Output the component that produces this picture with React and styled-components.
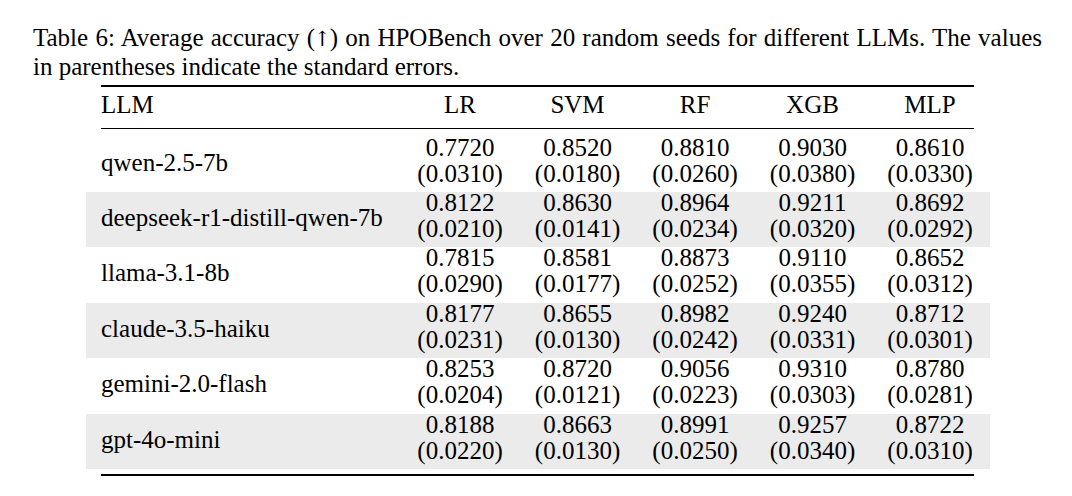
import React from 'react';
import styled, { createGlobalStyle } from 'styled-components';

const GlobalStyle = createGlobalStyle`
  html, body {
    margin: 0;
    padding: 0;
    background: #ffffff;
  }
  body {
    font-family: 'Liberation Serif', 'Times New Roman', serif;
    color: #000000;
  }
`;

const Page = styled.div`
  width: 1072px;
  height: 496px;
  overflow: hidden;
  background: #ffffff;
`;

const Caption = styled.div`
  width: 1009px;
  padding: 23.8px 0 0 33px;
  font-size: 25px;
  line-height: 28.5px;
`;

const CaptionLine = styled.div`
  white-space: nowrap;
  text-align: ${(p) => (p.$justify ? 'justify' : 'left')};
  text-align-last: ${(p) => (p.$justify ? 'justify' : 'left')};
`;

const Arrow = styled.span`
  font-family: 'DejaVu Serif', serif;
  font-size: 21px;
  margin: 0 -1.5px;
`;

const Table = styled.div`
  width: 904px;
  margin: 3.2px 0 0 86px;
  font-size: 25px;
`;

const Rule = styled.div`
  margin: ${(p) => p.$top || 0}px 16px 0 15px;
  height: ${(p) => p.$weight}px;
  background: #000000;
`;

const Row = styled.div`
  display: grid;
  grid-template-columns: 1fr repeat(5, 88px);
  column-gap: 29.5px;
  padding: 0 16px 0 15px;
  background: ${(p) => (p.$shaded ? '#ebebeb' : 'transparent')};
`;

const HeadRow = styled(Row)`
  padding-top: 4.3px;
  padding-bottom: 8.2px;
  line-height: 28.5px;
`;

const HeadCell = styled.div`
  text-align: ${(p) => (p.$left ? 'left' : 'center')};
  white-space: nowrap;
`;

const Body = styled.div`
  margin-top: 7.6px;
`;

const DataRow = styled(Row)`
  height: 55.4px;
  line-height: 21px;
`;

const Name = styled.div`
  padding-top: 15px;
  white-space: nowrap;
`;

const Cell = styled.div`
  display: flex;
  flex-direction: column;
  align-items: center;
  gap: 5px;
  white-space: nowrap;
`;

const columns = ['LR', 'SVM', 'RF', 'XGB', 'MLP'];

const rows = [
  { name: 'qwen-2.5-7b', mean: ['0.7720', '0.8520', '0.8810', '0.9030', '0.8610'], se: ['0.0310', '0.0180', '0.0260', '0.0380', '0.0330'] },
  { name: 'deepseek-r1-distill-qwen-7b', mean: ['0.8122', '0.8630', '0.8964', '0.9211', '0.8692'], se: ['0.0210', '0.0141', '0.0234', '0.0320', '0.0292'] },
  { name: 'llama-3.1-8b', mean: ['0.7815', '0.8581', '0.8873', '0.9110', '0.8652'], se: ['0.0290', '0.0177', '0.0252', '0.0355', '0.0312'] },
  { name: 'claude-3.5-haiku', mean: ['0.8177', '0.8655', '0.8982', '0.9240', '0.8712'], se: ['0.0231', '0.0130', '0.0242', '0.0331', '0.0301'] },
  { name: 'gemini-2.0-flash', mean: ['0.8253', '0.8720', '0.9056', '0.9310', '0.8780'], se: ['0.0204', '0.0121', '0.0223', '0.0303', '0.0281'] },
  { name: 'gpt-4o-mini', mean: ['0.8188', '0.8663', '0.8991', '0.9257', '0.8722'], se: ['0.0220', '0.0130', '0.0250', '0.0340', '0.0310'] },
];

export default function App() {
  return (
    <Page>
      <GlobalStyle />
      <Caption>
        <CaptionLine $justify>
          Table 6: Average accuracy (<Arrow>↑</Arrow>) on HPOBench over 20 random seeds for different LLMs. The values
        </CaptionLine>
        <CaptionLine>in parentheses indicate the standard errors.</CaptionLine>
      </Caption>
      <Table>
        <Rule $weight={2} />
        <HeadRow>
          <HeadCell $left>LLM</HeadCell>
          {columns.map((c) => (
            <HeadCell key={c}>{c}</HeadCell>
          ))}
        </HeadRow>
        <Rule $weight={1} />
        <Body>
          {rows.map((r, i) => (
            <DataRow key={r.name} $shaded={i % 2 === 1}>
              <Name>{r.name}</Name>
              {r.mean.map((m, j) => (
                <Cell key={columns[j]}>
                  <span>{m}</span>
                  <span>({r.se[j]})</span>
                </Cell>
              ))}
            </DataRow>
          ))}
        </Body>
        <Rule $weight={2} $top={5} />
      </Table>
    </Page>
  );
}
